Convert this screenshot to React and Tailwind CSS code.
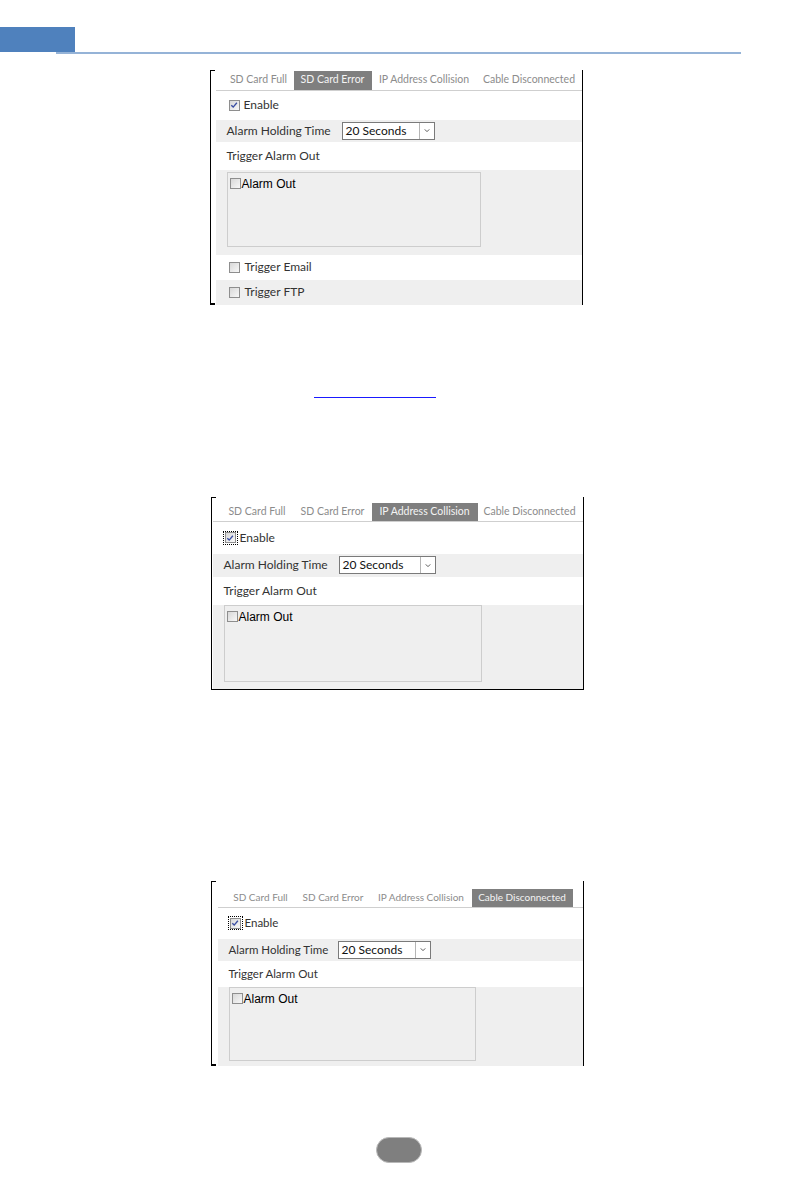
import React from 'react';
import clsx from 'clsx';

const TABS = ['SD Card Full', 'SD Card Error', 'IP Address Collision', 'Cable Disconnected'];

const CheckBox = ({ checked, focus }) => (
  <span className={clsx('inline-flex items-center justify-center shrink-0', focus ? 'border border-dotted border-black w-[15px] h-[14px]' : '')}>
    <span className="w-[11px] h-[11px] border border-[#8e8e8e] bg-gradient-to-br from-[#d8d8d8] to-[#f8f8f8] flex items-center justify-center">
      {checked && (
        <svg viewBox="0 0 10 10" className="w-[8px] h-[8px]">
          <path d="M1.6 5.2 L4 7.6 L8.6 2.2" fill="none" stroke="#3a4ea3" strokeWidth="1.7" />
        </svg>
      )}
    </span>
  </span>
);

const Select = ({ width }) => (
  <div className={clsx('h-[18px] border border-[#7a7a7a] bg-white flex items-center shrink-0', width)}>
    <span className="flex-1 pl-[3px] text-[12px] text-[#111] leading-none">20 Seconds</span>
    <span className="w-[15px] h-full border-l border-[#b5b5b5] flex items-center justify-center">
      <svg viewBox="0 0 8 6" className="w-[6px] h-[5px]">
        <path d="M1 1.5 L4 4.5 L7 1.5" fill="none" stroke="#555" strokeWidth="1.3" />
      </svg>
    </span>
  </div>
);

const Panel = ({ active, tabW, tabText, text, topGap, inset, tabsH, enableH, grayH, triggerH, areaH, listBox, labelW, selectW, focus, extra, bottom }) => (
  <div className={clsx('relative w-[373px] border-l-[1.5px] border-r-[1.5px] border-black text-[#333]', topGap, bottom && 'border-b-[1.5px]')}>
    {/* bracket ticks */}
    <div className="absolute left-0 top-0 w-[4px] h-[1.5px] bg-black" />
    {!bottom && <div className="absolute left-0 bottom-0 w-[4px] h-[1.5px] bg-black" />}

    <div className={clsx(inset, text)}>
      {/* Tabs */}
      <div className={clsx('flex items-stretch pl-[8px] border-b border-[#cfcfcf]', tabsH)}>
        {TABS.map((t, i) => (
          <div
            key={t}
            className={clsx(
              'flex items-center justify-center whitespace-nowrap',
              tabText,
              tabW[i],
              i === active ? 'bg-[#7f7f7f] text-[#f4f4f4]' : 'text-[#8c8c8c]'
            )}
          >
            {t}
          </div>
        ))}
      </div>

      {/* Enable */}
      <div className={clsx('flex items-center', enableH, focus ? 'pl-[10px] gap-[2px]' : 'pl-[13px] gap-[4px]')}>
        <CheckBox checked focus={focus} />
        <span>Enable</span>
      </div>

      {/* Alarm holding time */}
      <div className={clsx('flex items-center bg-[#efefef] pl-[11px]', grayH)}>
        <span className={clsx('whitespace-nowrap shrink-0', labelW)}>Alarm Holding Time</span>
        <Select width={selectW} />
      </div>

      {/* Trigger alarm out */}
      <div className={clsx('flex items-center pl-[11px]', triggerH)}>Trigger Alarm Out</div>

      <div className={clsx('bg-[#efefef] pl-[11px]', areaH)}>
        <div className={clsx('border border-[#cdcdcd] bg-[#efefef]', listBox)}>
          <div className="flex items-center gap-[1px] pl-[2px] pt-[2px] font-['Liberation_Sans',Arial,sans-serif] text-[12px] text-black">
            <CheckBox />
            <span>Alarm Out</span>
          </div>
        </div>
      </div>

      {extra && (
        <>
          <div className="h-[25px] flex items-center pl-[13px] gap-[5px]">
            <CheckBox />
            <span>Trigger Email</span>
          </div>
          <div className="h-[25px] flex items-center pl-[13px] gap-[5px] bg-[#efefef]">
            <CheckBox />
            <span>Trigger FTP</span>
          </div>
        </>
      )}
    </div>
  </div>
);

const App = () => (
  <div className="w-[794px] h-[1191px] bg-white overflow-hidden font-['Lato','Noto_Sans',sans-serif]">
    {/* Header */}
    <div className="pt-[27px]">
      <div className="w-[75px] h-[25px] bg-[#4f81bd]" />
      <div className="ml-[56px] w-[685px] h-[1.5px] bg-[#95b3d7]" />
    </div>

    {/* Panel 1: SD Card Error */}
    <div className="mt-[16px] ml-[210px]">
      <Panel
        active={1}
        tabW={['w-[70px]', 'w-[78px]', 'w-[105px]', 'w-[105px]']}
        tabText="text-[10.5px]"
        text="text-[12px]"
        topGap="pt-[1px]"
        inset="pl-[4.5px]"
        tabsH="h-[20px]"
        enableH="h-[29px]"
        grayH="h-[22px]"
        triggerH="h-[28px]"
        areaH="h-[85px] pt-[2px]"
        listBox="w-[254px] h-[75px]"
        labelW="w-[115px]"
        selectW="w-[93px]"
        extra
      />
    </div>

    {/* link underline */}
    <div className="mt-[92px] ml-[314px] w-[122px] h-[1.5px] bg-[#1a1aff]" />

    {/* Panel 2: IP Address Collision */}
    <div className="mt-[98.5px] ml-[211px]">
      <Panel
        active={2}
        tabW={['w-[73px]', 'w-[78px]', 'w-[106px]', 'w-[104px]']}
        tabText="text-[10.5px]"
        text="text-[12px]"
        topGap="pt-[6px]"
        inset="pl-[0.5px]"
        tabsH="h-[19px]"
        enableH="h-[32px]"
        grayH="h-[23px]"
        triggerH="h-[28px]"
        areaH="h-[84px]"
        listBox="w-[258px] h-[77px]"
        labelW="w-[115px]"
        selectW="w-[97px]"
        focus
        bottom
      />
    </div>

    {/* Panel 3: Cable Disconnected */}
    <div className="mt-[191px] ml-[211px]">
      <Panel
        active={3}
        tabW={['w-[70px]', 'w-[75px]', 'w-[101px]', 'w-[101px]']}
        tabText="text-[10px]"
        text="text-[11.5px]"
        topGap="pt-[8px]"
        inset="pl-[5.5px]"
        tabsH="h-[19px]"
        enableH="h-[31px]"
        grayH="h-[22px]"
        triggerH="h-[26px]"
        areaH="h-[79px]"
        listBox="w-[247px] h-[74px]"
        labelW="w-[109px]"
        selectW="w-[93px]"
        focus
      />
    </div>

    {/* page number badge */}
    <div className="mt-[71px] ml-[376px] w-[46px] h-[26px] rounded-full bg-[#7f7f7f] border border-[#b8b8b8]" />
  </div>
);

export default App;
